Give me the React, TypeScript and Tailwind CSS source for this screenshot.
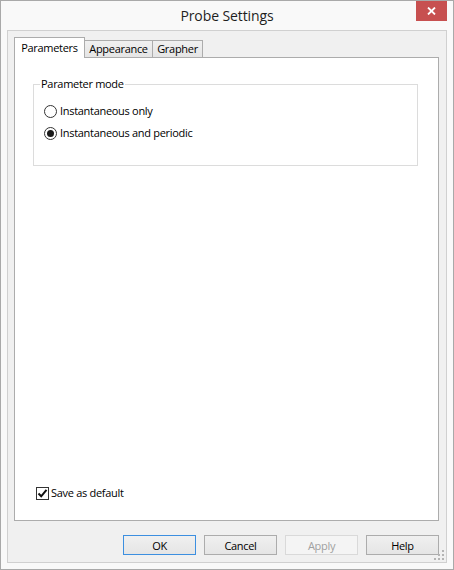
import React from "react";

const ui = "font-['Segoe_UI','Open_Sans',sans-serif]";

function Radio({ checked, label }: { checked?: boolean; label: string }) {
  return (
    <div className="flex items-center h-[16px] pl-[10px] gap-[3px]">
      <span className="w-[13px] h-[13px] rounded-full border border-[#333333] bg-white flex items-center justify-center">
        {checked && <span className="w-[7px] h-[7px] rounded-full bg-[#1a1a1a]" />}
      </span>
      <span>{label}</span>
    </div>
  );
}

function Button({ label, primary, disabled }: { label: string; primary?: boolean; disabled?: boolean }) {
  const tone = disabled
    ? "bg-[#f4f4f4] border-[#d9d9d9] text-[#a0a0a0]"
    : primary
      ? "bg-gradient-to-b from-[#f0f0f0] to-[#e5e5e5] border-[#3c8fe0] text-black"
      : "bg-gradient-to-b from-[#f0f0f0] to-[#e5e5e5] border-[#acacac] text-black";
  return (
    <button type="button" className={`w-[73px] h-[20px] border flex items-center justify-center leading-none ${tone}`}>
      {label}
    </button>
  );
}

export default function App() {
  return (
    <div className={`w-[454px] h-[570px] border border-[#a9a9a9] bg-[#f9f9f9] flex flex-col relative text-[11px] tracking-[-0.3px] text-black ${ui}`}>
      {/* title bar */}
      <div className="grid grid-cols-[1fr_auto_1fr] h-[29px]">
        <div />
        <div className="self-center text-[14px] tracking-[-0.1px] text-[#1e1e1e] pb-[1px]">Probe Settings</div>
        <button type="button" className="justify-self-end self-start mr-[6px] w-[31px] h-[20px] bg-[#c75050] flex items-center justify-center">
          <svg width="9" height="8" viewBox="0 0 9 8">
            <path d="M1 0.5 L8 7.5 M8 0.5 L1 7.5" stroke="white" strokeWidth="1.8" />
          </svg>
        </button>
      </div>

      {/* client area */}
      <div className="flex-1 mx-[6px] mb-[6px] border border-[#d0d0d0] bg-[#f0f0f0] flex flex-col">
        {/* tabs */}
        <div className="h-[26px] ml-[6px] flex items-end">
          <div className="relative z-10 -mb-px w-[71px] h-[21px] bg-white border border-b-0 border-[#acacac] flex items-center justify-center">
            Parameters
          </div>
          <div className="-ml-px w-[69px] h-[17px] bg-gradient-to-b from-[#f0f0f0] to-[#e5e5e5] border border-b-0 border-[#acacac] flex items-center justify-center">
            Appearance
          </div>
          <div className="-ml-px w-[51px] h-[17px] bg-gradient-to-b from-[#f0f0f0] to-[#e5e5e5] border border-b-0 border-[#acacac] flex items-center justify-center">
            Grapher
          </div>
        </div>

        {/* tab panel */}
        <div className="flex-1 ml-[6px] mr-[7px] bg-white border border-[#acacac] flex flex-col">
          <fieldset className="mt-[18px] ml-[18px] w-[385px] border border-[#dcdcdc] pb-[24px]">
            <legend className="ml-[6px] px-[1px] leading-[16px]">Parameter mode</legend>
            <div className="mt-[11px] flex flex-col gap-[6px]">
              <Radio label="Instantaneous only" />
              <Radio checked label="Instantaneous and periodic" />
            </div>
          </fieldset>

          <div className="flex-1" />

          <div className="flex items-center h-[16px] ml-[21px] mb-[19px] gap-[2px]">
            <span className="w-[13px] h-[13px] border border-[#333333] bg-white flex items-center justify-center">
              <svg width="11" height="11" viewBox="0 0 11 11">
                <path d="M1.5 5.5 L4.2 8.3 L9.5 1.8" fill="none" stroke="#111" strokeWidth="2" />
              </svg>
            </span>
            <span>Save as default</span>
          </div>
        </div>

        {/* buttons */}
        <div className="mt-[14px] mb-[7px] mr-[7px] flex justify-end gap-[8px]">
          <Button label="OK" primary />
          <Button label="Cancel" />
          <Button label="Apply" disabled />
          <Button label="Help" />
        </div>
      </div>

      {/* resize grip */}
      <div className="absolute right-[9px] bottom-[9px] grid grid-cols-3 gap-[2px]">
        <span className="w-[2px] h-[2px]" />
        <span className="w-[2px] h-[2px]" />
        <span className="w-[2px] h-[2px] bg-[#b4b4b4]" />
        <span className="w-[2px] h-[2px]" />
        <span className="w-[2px] h-[2px] bg-[#b4b4b4]" />
        <span className="w-[2px] h-[2px] bg-[#b4b4b4]" />
        <span className="w-[2px] h-[2px] bg-[#b4b4b4]" />
        <span className="w-[2px] h-[2px] bg-[#b4b4b4]" />
        <span className="w-[2px] h-[2px] bg-[#b4b4b4]" />
      </div>
    </div>
  );
}
